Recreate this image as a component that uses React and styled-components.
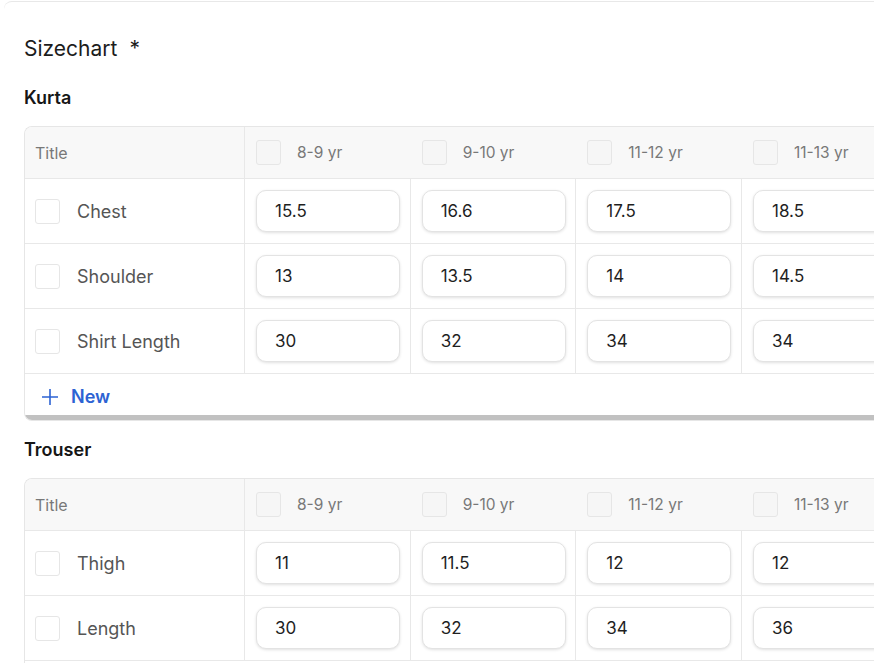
import React from "react";
import styled, { createGlobalStyle } from "styled-components";

const GlobalStyle = createGlobalStyle`
  html, body {
    margin: 0;
    padding: 0;
    background: #ffffff;
    overflow: hidden;
  }
  body {
    font-family: Inter, "Noto Sans", "Liberation Sans", sans-serif;
    color: #1f1f1f;
  }
`;

const Card = styled.div`
  margin: 1px 0 0 4px;
  width: 1200px;
  min-height: 700px;
  border-top: 1px solid #e8e8e8;
  border-radius: 8px 0 0 0;
  padding: 33px 0 0 20px;
  box-sizing: border-box;
`;

const Heading = styled.h2`
  margin: 0;
  font-size: 21px;
  font-weight: 400;
  line-height: 28px;
  color: #1c1c1c;

  span {
    margin-left: 12px;
  }
`;

const GroupTitle = styled.h3`
  margin: ${(p) => (p.$first ? "24px" : "18px")} 0 17px;
  font-size: 18px;
  font-weight: 600;
  line-height: 22px;
  color: #161616;
`;

const TableWrap = styled.div`
  border: 1px solid #e6e6e6;
  border-right: none;
  border-radius: 8px 0 0 8px;
  overflow: hidden;
`;

const Row = styled.div`
  display: grid;
  grid-template-columns: 220px repeat(${(p) => p.$cols}, 165.67px);
  height: ${(p) => (p.$head ? "51px" : "64px")};
  background: ${(p) => (p.$head ? "#f8f8f8" : "#ffffff")};
  border-bottom: 1px solid #e8e8e8;
`;

const Cell = styled.div`
  display: flex;
  align-items: center;
  box-sizing: border-box;
  padding: ${(p) => (p.$first ? "0 10px" : "0 11px")};
  border-right: ${(p) => (p.$divider ? "1px solid #e8e8e8" : "none")};
  gap: ${(p) => (p.$first ? "17px" : "16px")};
  min-width: 0;
`;

const Box = styled.span`
  width: 25px;
  height: 25px;
  flex: none;
  box-sizing: border-box;
  border: 1px solid #e6e6e6;
  border-radius: 3px;
  background: ${(p) => (p.$head ? "#f6f6f6" : "#ffffff")};
`;

const HeadText = styled.span`
  font-size: ${(p) => (p.$title ? "16px" : "15.5px")};
  color: #787878;
  white-space: nowrap;
`;

const Label = styled.span`
  font-size: 18px;
  color: #555555;
`;

const ValueInput = styled.input`
  width: 144px;
  height: 42px;
  flex: none;
  box-sizing: border-box;
  border: 1px solid #e3e3e3;
  border-radius: 10px;
  box-shadow: 0 1px 3px rgba(0, 0, 0, 0.12);
  padding: 0 18px;
  font-family: inherit;
  font-size: 17px;
  color: #1f1f1f;
  background: #ffffff;
  outline: none;
`;

const NewRow = styled.div`
  height: 41px;
  box-sizing: border-box;
  padding: 4px 0 0 15px;
  display: flex;
  align-items: center;
  gap: 11px;
  color: #2d63d3;
  font-size: 18px;
  font-weight: 600;
`;

const ScrollBar = styled.div`
  height: 5px;
  background: #c1c1c1;
`;

const sizes = ["8-9 yr", "9-10 yr", "11-12 yr", "11-13 yr"];

const groups = [
  {
    name: "Kurta",
    rows: [
      { title: "Chest", values: ["15.5", "16.6", "17.5", "18.5"] },
      { title: "Shoulder", values: ["13", "13.5", "14", "14.5"] },
      { title: "Shirt Length", values: ["30", "32", "34", "34"] },
    ],
  },
  {
    name: "Trouser",
    rows: [
      { title: "Thigh", values: ["11", "11.5", "12", "12"] },
      { title: "Length", values: ["30", "32", "34", "36"] },
    ],
  },
];

const PlusIcon = () => (
  <svg width="20" height="20" viewBox="0 0 20 20" fill="none">
    <path d="M10 2v16M2 10h16" stroke="#2d63d3" strokeWidth="1.6" />
  </svg>
);

const SizeTable = ({ rows }) => (
  <TableWrap>
    <Row $head $cols={sizes.length}>
      <Cell $first $divider>
        <HeadText $title>Title</HeadText>
      </Cell>
      {sizes.map((s) => (
        <Cell key={s}>
          <Box $head />
          <HeadText>{s}</HeadText>
        </Cell>
      ))}
    </Row>
    {rows.map((row) => (
      <Row key={row.title} $cols={sizes.length}>
        <Cell $first $divider>
          <Box />
          <Label>{row.title}</Label>
        </Cell>
        {row.values.map((v, i) => (
          <Cell key={i} $divider>
            <ValueInput defaultValue={v} />
          </Cell>
        ))}
      </Row>
    ))}
    <NewRow>
      <PlusIcon />
      New
    </NewRow>
    <ScrollBar />
  </TableWrap>
);

const App = () => (
  <>
    <GlobalStyle />
    <Card>
      <Heading>
        Sizechart<span>*</span>
      </Heading>
      {groups.map((g, i) => (
        <div key={g.name}>
          <GroupTitle $first={i === 0}>{g.name}</GroupTitle>
          <SizeTable rows={g.rows} />
        </div>
      ))}
    </Card>
  </>
);

export default App;
